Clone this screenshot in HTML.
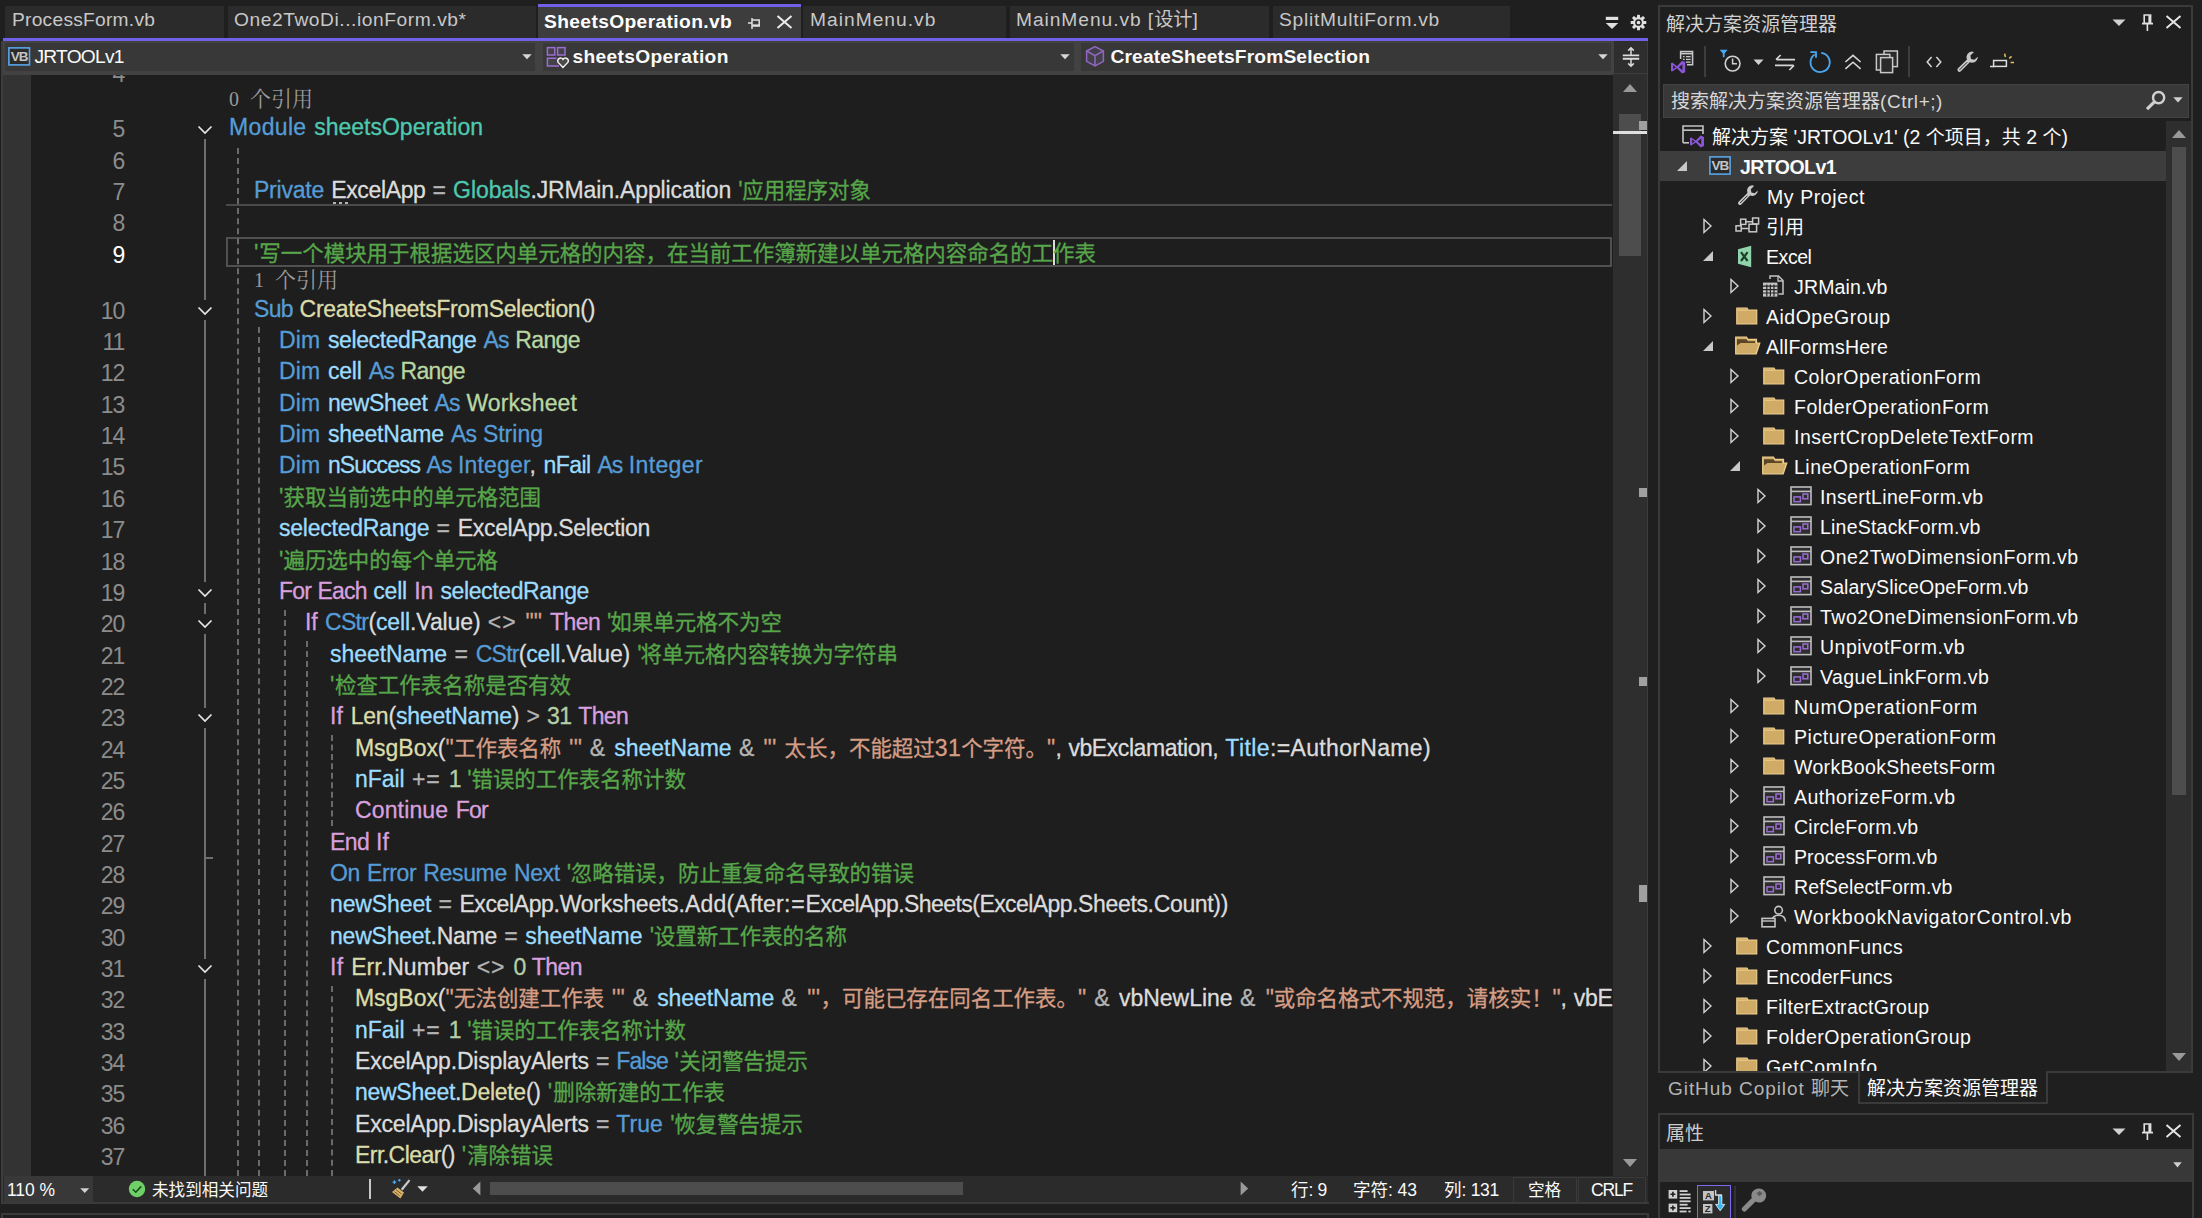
<!DOCTYPE html>
<html lang="zh-CN"><head><meta charset="utf-8"><title>JRTOOLv1 - SheetsOperation.vb</title>
<style>
*{box-sizing:border-box;margin:0;padding:0}
html,body{width:2202px;height:1218px;overflow:hidden;background:#1f1f1f}
body{position:relative;font-family:"Liberation Sans","Noto Sans CJK SC",sans-serif;color:#fafafa;font-size:19px}
i{font-style:normal}
body div,body span,body svg,body i.a{position:absolute}
.z{font-family:"Liberation Sans","Noto Sans CJK SC",sans-serif}
/* tabs */
.tab{top:6px;height:32px;background:#2b2b2b;color:#c8c8c8;font-size:19.2px;line-height:30px;white-space:nowrap;overflow:hidden}
.tab span{top:-1px}
.tab.act{top:4px;height:35px;background:#3d3d3d;border-top:3px solid #7160e8;color:#fff;font-weight:bold;line-height:31px}
#tabline{left:3px;top:38px;width:1645px;height:3px;background:#7160e8}
#navbar{left:3px;top:41px;width:1611px;height:34px;background:#424242}
.combo{top:43px;height:28px;background:#383838;color:#fafafa;font-size:19.2px;line-height:28px;white-space:nowrap}
.combo span{top:0}
/* editor */
#editor{left:0;top:75px;width:1613px;height:1101px;background:#1e1e1e;overflow:hidden}
#ed{left:0;top:-75px;width:1613px;height:1218px}
#gutter{left:3px;top:74px;width:28px;height:1102px;background:#333}
.ln{left:40px;width:84px;text-align:right;color:#8c8c8c;height:31px;line-height:31px;font-size:23px;letter-spacing:-1.2px}
.ln.cur{color:#fff}
.cl{height:31px;line-height:31px;white-space:pre;font-size:23px;word-spacing:1px;-webkit-text-stroke:0.3px}
.cl span{position:static}
.cl .z{font-size:21.46px;letter-spacing:0;line-height:0}
.lens{word-spacing:6px;color:#9a9a9a;font-family:"Liberation Serif","Noto Serif CJK SC",serif;font-size:20px;line-height:26px;height:26px;white-space:pre}
.lens .z{font-family:"Liberation Serif","Noto Serif CJK SC",serif;font-size:21px;line-height:0}
.k{color:#569cd6}.c{color:#d8a0df}.t{color:#4ec9b0}.i{color:#b8d7a3}.v{color:#9cdcfe}.f{color:#dcdcaa}
.m{color:#57a64a}.s{color:#d69d85}.n{color:#b5cea8}.p{color:#dcdcdc}.o{color:#b4b4b4}
.vg{width:0;border-left:2px dashed #6a6a6a}
.fl{width:2px;background:#6e6e6e}
/* scrollbar */
#vsb{left:1613px;top:74px;width:35px;height:1102px;background:#2e2e2e}
/* status row */
#strow{left:3px;top:1176px;width:1645px;height:27px;background:#2b2b2b}
.st{top:1177px;font-size:17.5px;line-height:27px;height:27px;color:#fafafa;white-space:pre}
.st .z,.st.z{line-height:0}
/* solution explorer */
#se{left:1658px;top:5px;width:535px;height:1068px;background:#1f1f1f;border:2px solid #3a3a3a}
#tree{left:1660px;top:121px;width:506px;height:950px;overflow:hidden}
#tree .w{left:-1660px;top:-121px;width:2202px;height:1218px}
.tr{left:1660px;width:506px;height:30px}
.tr.sel{background:#3d3d3d}
.tt{font-size:19.5px;line-height:30px;height:30px;margin-top:1px;white-space:pre;color:#fafafa}
.tt.b{font-weight:bold}
.tt .z{font-size:19px;line-height:0;position:relative;top:0.4px;letter-spacing:0}

</style></head>
<body>
<div class="tab" style="left:5px;width:219px"><span id="tb1" style="left:7px;letter-spacing:0.252px">ProcessForm.vb</span></div>
<div class="tab" style="left:228px;width:308px"><span id="tb2" style="left:6px;letter-spacing:0.562px">One2TwoDi...ionForm.vb*</span></div>
<div class="tab act" style="left:538px;width:263px"><span id="tb3" style="left:6px;letter-spacing:0.380px">SheetsOperation.vb</span></div>
<svg style="left:747px;top:17px" width="14" height="13" viewBox="0 0 14 13"><path d="M1 6H5M5 1V12M5.6 3H12.2V8.4H5.6" fill="none" stroke="#e0e0e0" stroke-width="1.5"/><path d="M5.6 8.6H12.9" stroke="#e0e0e0" stroke-width="2.2"/></svg>
<svg style="left:776px;top:15px" width="17" height="14" viewBox="0 0 17 14"><path d="M1.5 1L15.5 13M15.5 1L1.5 13" fill="none" stroke="#ececec" stroke-width="2"/></svg>
<div class="tab" style="left:803px;width:203px"><span id="tb4" style="left:7px;letter-spacing:1.019px">MainMenu.vb</span></div>
<div class="tab" style="left:1010px;width:259px"><span id="tb5" style="left:6px;letter-spacing:0.946px">MainMenu.vb [<i class="z" style="letter-spacing:0;line-height:0">设计</i>]</span></div>
<div class="tab" style="left:1273px;width:237px"><span id="tb6" style="left:6px;letter-spacing:0.753px">SplitMultiForm.vb</span></div>
<svg style="left:1605px;top:16px" width="14" height="14" viewBox="0 0 14 14"><rect x="0.8" y="0.8" width="12.4" height="3.2" fill="#e0e0e0"/><path d="M0.8 7H13.2L7 13Z" fill="#e0e0e0"/></svg>
<svg style="left:1630px;top:14px" width="17" height="17" viewBox="-8.5 -8.5 17 17"><g fill="#e0e0e0"><circle r="5.4"/><g id="gt"><rect x="-1.5" y="-7.8" width="3" height="4" rx="0.6"/></g><rect x="-1.5" y="-7.8" width="3" height="4" rx="0.6" transform="rotate(45)"/><rect x="-1.5" y="-7.8" width="3" height="4" rx="0.6" transform="rotate(90)"/><rect x="-1.5" y="-7.8" width="3" height="4" rx="0.6" transform="rotate(135)"/><rect x="-1.5" y="-7.8" width="3" height="4" rx="0.6" transform="rotate(180)"/><rect x="-1.5" y="-7.8" width="3" height="4" rx="0.6" transform="rotate(225)"/><rect x="-1.5" y="-7.8" width="3" height="4" rx="0.6" transform="rotate(270)"/><rect x="-1.5" y="-7.8" width="3" height="4" rx="0.6" transform="rotate(315)"/></g><circle r="2.6" fill="none" stroke="#1f1f1f" stroke-width="1.5"/></svg>
<div id="tabline"></div>
<div id="navbar"></div>
<div class="combo" style="left:5px;width:530px"><span id="nv1" style="left:29.5px;letter-spacing:-0.758px">JRTOOLv1</span></div>
<svg style="left:8px;top:47px" width="23" height="19" viewBox="0 0 23 19"><rect x="0.9" y="0.9" width="20.6" height="17" fill="#2b2b2b" stroke="#58a6e8" stroke-width="1.6"/><text x="11.2" y="14" text-anchor="middle" font-family="Liberation Sans, sans-serif" font-size="13.5" font-weight="bold" fill="#c4c4c4" letter-spacing="-1">VB</text></svg>
<svg style="left:522px;top:54px" width="10" height="5.5" viewBox="0 0 11 6"><path d="M0.3 0.3H10.7L5.5 5.7Z" fill="#d6d6d6"/></svg>
<div class="combo" style="left:543px;width:531px"><span id="nv2" style="left:29.5px;font-weight:bold;letter-spacing:0.319px">sheetsOperation</span></div>
<svg style="left:546px;top:46px" width="24" height="23" viewBox="0 0 24 23"><g fill="#454149" stroke="#9a6dd0" stroke-width="1.5"><rect x="1.4" y="1.6" width="7.4" height="7.4"/><rect x="11.6" y="1.6" width="7.4" height="7.4"/><path d="M10.6 12.2H1.4V20H13"/></g><path d="M17 21.4L12.2 16.4A2.7 2.7 0 0 1 17 13.4A2.7 2.7 0 0 1 21.8 16.4Z" fill="#4a4a4a" stroke="#f0f0f0" stroke-width="1.5"/></svg>
<svg style="left:1060px;top:54px" width="10" height="5.5" viewBox="0 0 11 6"><path d="M0.3 0.3H10.7L5.5 5.7Z" fill="#d6d6d6"/></svg>
<div class="combo" style="left:1081px;width:530px"><span id="nv3" style="left:29.5px;font-weight:bold;letter-spacing:0.143px">CreateSheetsFromSelection</span></div>
<svg style="left:1085px;top:45px" width="20" height="23" viewBox="0 0 20 23"><path d="M10 1.6L18.4 6V16.4L10 21L1.6 16.4V6Z" fill="#433f4a" stroke="#9068c0" stroke-width="1.5"/><path d="M1.6 6L10 10.6L18.4 6M10 10.6V21" fill="none" stroke="#9068c0" stroke-width="1.5"/></svg>
<svg style="left:1598px;top:54px" width="10" height="5.5" viewBox="0 0 11 6"><path d="M0.3 0.3H10.7L5.5 5.7Z" fill="#d6d6d6"/></svg>
<div style="left:1614px;top:41px;width:34px;height:33px;background:#2e2e2e;border-right:1px solid #3d3d3d;border-bottom:1px solid #3d3d3d"></div>
<svg style="left:1622px;top:46px" width="18" height="22" viewBox="0 0 18 22"><path d="M0.8 9.4H17.2M0.8 12.8H17.2" stroke="#dcdcdc" stroke-width="1.9"/><path d="M9 2V9M6.2 4.6L9 1.8L11.8 4.6M9 13V20M6.2 17.4L9 20.2L11.8 17.4" fill="none" stroke="#dcdcdc" stroke-width="1.5"/></svg>
<div id="editor"><div id="ed">
<div id="gutter"></div>
<div class="ln" style="top:59.4px">4</div>
<div style="left:226px;top:204px;width:1386px;height:2px;background:#4a4a4a"></div>
<div style="left:226px;top:237px;width:1386px;height:30px;border:2px solid #505050"></div>
<svg style="left:197px;top:124.6px" width="16" height="10" viewBox="0 0 16 10"><path d="M1.5 1.5L8 8L14.5 1.5" fill="none" stroke="#e6e6e6" stroke-width="1.7"/></svg>
<svg style="left:197px;top:305.9px" width="16" height="10" viewBox="0 0 16 10"><path d="M1.5 1.5L8 8L14.5 1.5" fill="none" stroke="#e6e6e6" stroke-width="1.7"/></svg>
<svg style="left:197px;top:588.0px" width="16" height="10" viewBox="0 0 16 10"><path d="M1.5 1.5L8 8L14.5 1.5" fill="none" stroke="#e6e6e6" stroke-width="1.7"/></svg>
<svg style="left:197px;top:619.3px" width="16" height="10" viewBox="0 0 16 10"><path d="M1.5 1.5L8 8L14.5 1.5" fill="none" stroke="#e6e6e6" stroke-width="1.7"/></svg>
<svg style="left:197px;top:713.4px" width="16" height="10" viewBox="0 0 16 10"><path d="M1.5 1.5L8 8L14.5 1.5" fill="none" stroke="#e6e6e6" stroke-width="1.7"/></svg>
<svg style="left:197px;top:964.1px" width="16" height="10" viewBox="0 0 16 10"><path d="M1.5 1.5L8 8L14.5 1.5" fill="none" stroke="#e6e6e6" stroke-width="1.7"/></svg>
<div class="fl" style="left:204px;top:139.1px;height:161.3px"></div>
<div class="fl" style="left:204px;top:320.4px;height:262.1px"></div>
<div class="fl" style="left:204px;top:602.5px;height:11.3px"></div>
<div class="fl" style="left:204px;top:633.8px;height:74.0px"></div>
<div class="fl" style="left:204px;top:727.9px;height:230.8px"></div>
<div class="fl" style="left:204px;top:978.6px;height:197.4px"></div>
<div style="left:205px;top:857px;width:8px;height:2px;background:#6e6e6e"></div>
<div class="vg" style="left:237.0px;top:148.1px;height:1027.9px"></div>
<div class="vg" style="left:258.0px;top:327.4px;height:848.6px"></div>
<div class="vg" style="left:283.5px;top:609.5px;height:566.5px"></div>
<div class="vg" style="left:306.0px;top:640.9px;height:535.1px"></div>
<div class="vg" style="left:331.0px;top:734.9px;height:91.0px"></div>
<div class="vg" style="left:331.0px;top:985.7px;height:190.3px"></div>
<div class="lens" style="left:229px;top:86px">0 <i class="z">个引用</i></div>
<div class="lens" style="left:254px;top:267px">1 <i class="z">个引用</i></div>
<div style="left:1053px;top:240px;width:2px;height:25px;background:#dcdcdc"></div>
<div style="left:333px;top:202px;width:3px;height:2px;background:#b4b4b4"></div>
<div style="left:339px;top:202px;width:3px;height:2px;background:#b4b4b4"></div>
<div style="left:345px;top:202px;width:3px;height:2px;background:#b4b4b4"></div>

<div class="ln" style="top:114.4px">5</div>
<div class="cl" id="L5_0" style="top:112.4px;left:229.0px;letter-spacing:0.339px"><span class="k">Module </span></div>
<div class="cl" id="L5_1" style="top:112.4px;left:314.2px;letter-spacing:0.001px"><span class="t">sheetsOperation</span></div>
<div class="ln" style="top:145.7px">6</div>
<div class="ln" style="top:177.0px">7</div>
<div class="cl" id="L7_0" style="top:175.0px;left:254.0px;letter-spacing:-0.223px"><span class="k">Private </span></div>
<div class="cl" id="L7_1" style="top:175.0px;left:331.2px;letter-spacing:-0.351px"><span class="p">ExcelApp </span></div>
<div class="cl" id="L7_2" style="top:175.0px;left:432.6px;letter-spacing:-0.164px"><span class="o">= </span></div>
<div class="cl" id="L7_3" style="top:175.0px;left:453.1px;letter-spacing:-0.083px"><span class="t">Globals</span></div>
<div class="cl" id="L7_4" style="top:175.0px;left:530.5px;letter-spacing:-0.143px"><span class="p">.JRMain.Application </span></div>
<div class="cl" id="L7_5" style="top:175.0px;left:738.3px;letter-spacing:-0.441px"><span class="m">'<i class="z">应用程序对象</i></span></div>
<div class="ln" style="top:208.3px">8</div>
<div class="ln cur" style="top:239.6px">9</div>
<div class="cl" id="L9" style="top:237.6px;left:254.0px;letter-spacing:0.906px"><span class="m">'<i class="z">写一个模块用于根据选区内单元格的内容，在当前工作簿新建以单元格内容命名的工作表</i></span></div>
<div class="ln" style="top:295.7px">10</div>
<div class="cl" id="L10_0" style="top:293.7px;left:254.0px;letter-spacing:-0.682px"><span class="k">Sub </span></div>
<div class="cl" id="L10_1" style="top:293.7px;left:299.6px;letter-spacing:-0.328px"><span class="f">CreateSheetsFromSelection</span><span class="p">()</span></div>
<div class="ln" style="top:327.0px">11</div>
<div class="cl" id="L11_0" style="top:325.0px;left:279.0px;letter-spacing:0.155px"><span class="k">Dim </span></div>
<div class="cl" id="L11_1" style="top:325.0px;left:327.9px;letter-spacing:-0.382px"><span class="v">selectedRange </span></div>
<div class="cl" id="L11_2" style="top:325.0px;left:483.4px;letter-spacing:-0.811px"><span class="k">As </span></div>
<div class="cl" id="L11_3" style="top:325.0px;left:515.2px;letter-spacing:-0.596px"><span class="i">Range</span></div>
<div class="ln" style="top:358.4px">12</div>
<div class="cl" id="L12_0" style="top:356.4px;left:279.0px;letter-spacing:0.155px"><span class="k">Dim </span></div>
<div class="cl" id="L12_1" style="top:356.4px;left:327.9px;letter-spacing:-0.221px"><span class="v">cell </span></div>
<div class="cl" id="L12_2" style="top:356.4px;left:368.7px;letter-spacing:-0.811px"><span class="k">As </span></div>
<div class="cl" id="L12_3" style="top:356.4px;left:400.5px;letter-spacing:-0.656px"><span class="i">Range</span></div>
<div class="ln" style="top:389.7px">13</div>
<div class="cl" id="L13_0" style="top:387.7px;left:279.0px;letter-spacing:0.155px"><span class="k">Dim </span></div>
<div class="cl" id="L13_1" style="top:387.7px;left:327.9px;letter-spacing:-0.334px"><span class="v">newSheet </span></div>
<div class="cl" id="L13_2" style="top:387.7px;left:434.6px;letter-spacing:-0.811px"><span class="k">As </span></div>
<div class="cl" id="L13_3" style="top:387.7px;left:466.4px;letter-spacing:0.120px"><span class="i">Worksheet</span></div>
<div class="ln" style="top:421.1px">14</div>
<div class="cl" id="L14_0" style="top:419.1px;left:279.0px;letter-spacing:0.155px"><span class="k">Dim </span></div>
<div class="cl" id="L14_1" style="top:419.1px;left:327.9px;letter-spacing:-0.182px"><span class="v">sheetName </span></div>
<div class="cl" id="L14_2" style="top:419.1px;left:451.1px;letter-spacing:-0.811px"><span class="k">As </span></div>
<div class="cl" id="L14_3" style="top:419.1px;left:482.9px;letter-spacing:0.001px"><span class="k">String</span></div>
<div class="ln" style="top:452.4px">15</div>
<div class="cl" id="L15_0" style="top:450.4px;left:279.0px;letter-spacing:0.155px"><span class="k">Dim </span></div>
<div class="cl" id="L15_1" style="top:450.4px;left:327.9px;letter-spacing:-0.934px"><span class="v">nSuccess </span></div>
<div class="cl" id="L15_2" style="top:450.4px;left:426.6px;letter-spacing:-0.945px"><span class="k">As </span></div>
<div class="cl" id="L15_3" style="top:450.4px;left:458.0px;letter-spacing:0.164px"><span class="k">Integer</span><span class="p">, </span></div>
<div class="cl" id="L15_4" style="top:450.4px;left:543.6px;letter-spacing:-0.575px"><span class="v">nFail </span></div>
<div class="cl" id="L15_5" style="top:450.4px;left:597.4px;letter-spacing:-0.978px"><span class="k">As </span></div>
<div class="cl" id="L15_6" style="top:450.4px;left:628.7px;letter-spacing:0.384px"><span class="k">Integer</span></div>
<div class="ln" style="top:483.8px">16</div>
<div class="cl" id="L16" style="top:481.8px;left:279.0px;letter-spacing:0.141px"><span class="m">'<i class="z">获取当前选中的单元格范围</i></span></div>
<div class="ln" style="top:515.1px">17</div>
<div class="cl" id="L17_0" style="top:513.1px;left:279.0px;letter-spacing:-0.239px"><span class="v">selectedRange </span></div>
<div class="cl" id="L17_1" style="top:513.1px;left:436.5px;letter-spacing:0.236px"><span class="o">= </span></div>
<div class="cl" id="L17_2" style="top:513.1px;left:457.8px;letter-spacing:-0.333px"><span class="p">ExcelApp.Selection</span></div>
<div class="ln" style="top:546.5px">18</div>
<div class="cl" id="L18" style="top:544.5px;left:279.0px;letter-spacing:0.047px"><span class="m">'<i class="z">遍历选中的每个单元格</i></span></div>
<div class="ln" style="top:577.8px">19</div>
<div class="cl" id="L19_0" style="top:575.8px;left:279.0px;letter-spacing:-0.824px"><span class="c">For Each </span></div>
<div class="cl" id="L19_1" style="top:575.8px;left:373.3px;letter-spacing:-0.201px"><span class="v">cell </span></div>
<div class="cl" id="L19_2" style="top:575.8px;left:414.2px;letter-spacing:-0.126px"><span class="c">In </span></div>
<div class="cl" id="L19_3" style="top:575.8px;left:440.4px;letter-spacing:-0.373px"><span class="v">selectedRange</span></div>
<div class="ln" style="top:609.1px">20</div>
<div class="cl" id="L20_0" style="top:607.1px;left:305.0px;letter-spacing:-0.091px"><span class="c">If </span></div>
<div class="cl" id="L20_1" style="top:607.1px;left:324.9px;letter-spacing:-0.625px"><span class="k">CStr</span></div>
<div class="cl" id="L20_2" style="top:607.1px;left:368.4px;letter-spacing:-0.104px"><span class="p">(</span><span class="v">cell</span><span class="p">.Value) </span></div>
<div class="cl" id="L20_3" style="top:607.1px;left:487.8px;letter-spacing:1.111px"><span class="o">&lt;&gt; </span></div>
<div class="cl" id="L20_4" style="top:607.1px;left:525.4px;letter-spacing:0.255px"><span class="s">"" </span></div>
<div class="cl" id="L20_5" style="top:607.1px;left:549.9px;letter-spacing:-0.526px"><span class="c">Then </span></div>
<div class="cl" id="L20_6" style="top:607.1px;left:607.1px;letter-spacing:-1.147px"><span class="m">'<i class="z">如果单元格不为空</i></span></div>
<div class="ln" style="top:640.5px">21</div>
<div class="cl" id="L21_0" style="top:638.5px;left:330.0px;letter-spacing:-0.062px"><span class="v">sheetName </span></div>
<div class="cl" id="L21_1" style="top:638.5px;left:454.4px;letter-spacing:0.236px"><span class="o">= </span></div>
<div class="cl" id="L21_2" style="top:638.5px;left:475.7px;letter-spacing:-0.725px"><span class="k">CStr</span></div>
<div class="cl" id="L21_3" style="top:638.5px;left:518.8px;letter-spacing:-0.181px"><span class="p">(</span><span class="v">cell</span><span class="p">.Value) </span></div>
<div class="cl" id="L21_4" style="top:638.5px;left:637.2px;letter-spacing:-1.059px"><span class="m">'<i class="z">将单元格内容转换为字符串</i></span></div>
<div class="ln" style="top:671.8px">22</div>
<div class="cl" id="L22" style="top:669.8px;left:330.0px;letter-spacing:0.594px"><span class="m">'<i class="z">检查工作表名称是否有效</i></span></div>
<div class="ln" style="top:703.2px">23</div>
<div class="cl" id="L23_0" style="top:701.2px;left:330.0px;letter-spacing:0.176px"><span class="c">If </span></div>
<div class="cl" id="L23_1" style="top:701.2px;left:350.7px;letter-spacing:-0.202px"><span class="f">Len</span><span class="p">(</span><span class="v">sheetName</span><span class="p">) </span></div>
<div class="cl" id="L23_2" style="top:701.2px;left:526.4px;letter-spacing:-0.164px"><span class="o">&gt; </span></div>
<div class="cl" id="L23_3" style="top:701.2px;left:546.9px;letter-spacing:-0.528px"><span class="n">31 </span></div>
<div class="cl" id="L23_4" style="top:701.2px;left:578.3px;letter-spacing:-0.684px"><span class="c">Then</span></div>
<div class="ln" style="top:734.5px">24</div>
<div class="cl" id="L24_0" style="top:732.5px;left:355.0px;letter-spacing:-0.038px"><span class="f">MsgBox</span><span class="p">(</span></div>
<div class="cl" id="L24_1" style="top:732.5px;left:445.5px;letter-spacing:0.301px"><span class="s">"<i class="z">工作表名称</i> '" </span></div>
<div class="cl" id="L24_2" style="top:732.5px;left:589.8px;letter-spacing:0.883px"><span class="o">&amp; </span></div>
<div class="cl" id="L24_3" style="top:732.5px;left:614.3px;letter-spacing:-0.032px"><span class="v">sheetName </span></div>
<div class="cl" id="L24_4" style="top:732.5px;left:739.0px;letter-spacing:0.883px"><span class="o">&amp; </span></div>
<div class="cl" id="L24_5" style="top:732.5px;left:763.5px;letter-spacing:0.378px"><span class="s">"' <i class="z">太长，不能超过</i>31<i class="z">个字符。</i>"</span></div>
<div class="cl" id="L24_6" style="top:732.5px;left:1055.5px;letter-spacing:-0.432px"><span class="p">, vbExclamation, </span></div>
<div class="cl" id="L24_7" style="top:732.5px;left:1225.3px;letter-spacing:0.418px"><span class="v">Title</span></div>
<div class="cl" id="L24_8" style="top:732.5px;left:1270.0px;letter-spacing:0.338px"><span class="p">:=AuthorName)</span></div>
<div class="ln" style="top:765.9px">25</div>
<div class="cl" id="L25_0" style="top:763.9px;left:355.0px;letter-spacing:-0.042px"><span class="v">nFail </span></div>
<div class="cl" id="L25_1" style="top:763.9px;left:412.0px;letter-spacing:0.845px"><span class="o">+= </span></div>
<div class="cl" id="L25_2" style="top:763.9px;left:448.8px;letter-spacing:-0.894px"><span class="n">1 </span></div>
<div class="cl" id="L25_3" style="top:763.9px;left:467.2px;letter-spacing:-0.153px"><span class="m">'<i class="z">错误的工作表名称计数</i></span></div>
<div class="ln" style="top:797.2px">26</div>
<div class="cl" id="L26_0" style="top:795.2px;left:355.0px;letter-spacing:0.137px"><span class="c">Continue </span></div>
<div class="cl" id="L26_1" style="top:795.2px;left:455.7px;letter-spacing:-0.733px"><span class="c">For</span></div>
<div class="ln" style="top:828.6px">27</div>
<div class="cl" id="L27_0" style="top:826.6px;left:330.0px;letter-spacing:-0.582px"><span class="c">End </span></div>
<div class="cl" id="L27_1" style="top:826.6px;left:376.0px;letter-spacing:0.109px"><span class="c">If</span></div>
<div class="ln" style="top:859.9px">28</div>
<div class="cl" id="L28_0" style="top:857.9px;left:330.0px;letter-spacing:-0.357px"><span class="k">On Error Resume Next </span></div>
<div class="cl" id="L28_1" style="top:857.9px;left:566.8px;letter-spacing:-0.472px"><span class="m">'<i class="z">忽略错误，防止重复命名导致的错误</i></span></div>
<div class="ln" style="top:891.3px">29</div>
<div class="cl" id="L29_0" style="top:889.3px;left:330.0px;letter-spacing:-0.123px"><span class="v">newSheet </span></div>
<div class="cl" id="L29_1" style="top:889.3px;left:438.6px;letter-spacing:-0.014px"><span class="o">= </span></div>
<div class="cl" id="L29_2" style="top:889.3px;left:459.4px;letter-spacing:-0.384px"><span class="p">ExcelApp</span></div>
<div class="cl" id="L29_3" style="top:889.3px;left:553.5px;letter-spacing:-0.228px"><span class="p">.Worksheets</span></div>
<div class="cl" id="L29_4" style="top:889.3px;left:678.4px;letter-spacing:0.205px"><span class="p">.Add(After</span></div>
<div class="cl" id="L29_5" style="top:889.3px;left:784.0px;letter-spacing:0.836px"><span class="p">:=</span></div>
<div class="cl" id="L29_6" style="top:889.3px;left:805.5px;letter-spacing:-0.558px"><span class="p">ExcelApp.Sheets</span></div>
<div class="cl" id="L29_7" style="top:889.3px;left:972.3px;letter-spacing:-0.570px"><span class="p">(ExcelApp</span></div>
<div class="cl" id="L29_8" style="top:889.3px;left:1072.0px;letter-spacing:-0.340px"><span class="p">.Sheets.Count))</span></div>
<div class="ln" style="top:922.6px">30</div>
<div class="cl" id="L30_0" style="top:920.6px;left:330.0px;letter-spacing:-0.225px"><span class="v">newSheet</span><span class="p">.Name </span></div>
<div class="cl" id="L30_1" style="top:920.6px;left:504.3px;letter-spacing:0.086px"><span class="o">= </span></div>
<div class="cl" id="L30_2" style="top:920.6px;left:525.3px;letter-spacing:-0.062px"><span class="v">sheetName </span></div>
<div class="cl" id="L30_3" style="top:920.6px;left:649.7px;letter-spacing:-0.200px"><span class="m">'<i class="z">设置新工作表的名称</i></span></div>
<div class="ln" style="top:953.9px">31</div>
<div class="cl" id="L31_0" style="top:951.9px;left:330.0px;letter-spacing:0.343px"><span class="c">If </span></div>
<div class="cl" id="L31_1" style="top:951.9px;left:351.2px;letter-spacing:0.056px"><span class="f">Err</span><span class="p">.Number </span></div>
<div class="cl" id="L31_2" style="top:951.9px;left:476.8px;letter-spacing:0.845px"><span class="o">&lt;&gt; </span></div>
<div class="cl" id="L31_3" style="top:951.9px;left:513.6px;letter-spacing:-0.994px"><span class="n">0 </span></div>
<div class="cl" id="L31_4" style="top:951.9px;left:531.8px;letter-spacing:-0.559px"><span class="c">Then</span></div>
<div class="ln" style="top:985.3px">32</div>
<div class="cl" id="L32_0" style="top:983.3px;left:355.0px;letter-spacing:-0.038px"><span class="f">MsgBox</span><span class="p">(</span></div>
<div class="cl" id="L32_1" style="top:983.3px;left:445.5px;letter-spacing:0.299px"><span class="s">"<i class="z">无法创建工作表</i> '" </span></div>
<div class="cl" id="L32_2" style="top:983.3px;left:632.7px;letter-spacing:0.883px"><span class="o">&amp; </span></div>
<div class="cl" id="L32_3" style="top:983.3px;left:657.2px;letter-spacing:-0.072px"><span class="v">sheetName </span></div>
<div class="cl" id="L32_4" style="top:983.3px;left:781.5px;letter-spacing:1.483px"><span class="o">&amp; </span></div>
<div class="cl" id="L32_5" style="top:983.3px;left:807.2px;letter-spacing:0.380px"><span class="s">"'<i class="z">，可能已存在同名工作表。</i>" </span></div>
<div class="cl" id="L32_6" style="top:983.3px;left:1094.3px;letter-spacing:0.983px"><span class="o">&amp; </span></div>
<div class="cl" id="L32_7" style="top:983.3px;left:1119.0px;letter-spacing:-0.019px"><span class="p">vbNewLine </span></div>
<div class="cl" id="L32_8" style="top:983.3px;left:1240.0px;letter-spacing:1.533px"><span class="o">&amp; </span></div>
<div class="cl" id="L32_9" style="top:983.3px;left:1265.8px;letter-spacing:-0.275px"><span class="s">"<i class="z">或命名格式不规范，请核实！</i>"</span></div>
<div class="cl" id="L32_10" style="top:983.3px;left:1560.5px;letter-spacing:-0.254px"><span class="p">, vbExcl</span></div>
<div class="ln" style="top:1016.6px">33</div>
<div class="cl" id="L33_0" style="top:1014.6px;left:355.0px;letter-spacing:-0.042px"><span class="v">nFail </span></div>
<div class="cl" id="L33_1" style="top:1014.6px;left:412.0px;letter-spacing:0.845px"><span class="o">+= </span></div>
<div class="cl" id="L33_2" style="top:1014.6px;left:448.8px;letter-spacing:-0.894px"><span class="n">1 </span></div>
<div class="cl" id="L33_3" style="top:1014.6px;left:467.2px;letter-spacing:-0.153px"><span class="m">'<i class="z">错误的工作表名称计数</i></span></div>
<div class="ln" style="top:1048.0px">34</div>
<div class="cl" id="L34_0" style="top:1046.0px;left:355.0px;letter-spacing:-0.185px"><span class="p">ExcelApp.DisplayAlerts </span></div>
<div class="cl" id="L34_1" style="top:1046.0px;left:595.9px;letter-spacing:-0.214px"><span class="o">= </span></div>
<div class="cl" id="L34_2" style="top:1046.0px;left:616.3px;letter-spacing:-0.923px"><span class="k">False </span></div>
<div class="cl" id="L34_3" style="top:1046.0px;left:674.4px;letter-spacing:0.459px"><span class="m">'<i class="z">关闭警告提示</i></span></div>
<div class="ln" style="top:1079.3px">35</div>
<div class="cl" id="L35_0" style="top:1077.3px;left:355.0px;letter-spacing:-0.289px"><span class="v">newSheet</span><span class="p">.</span><span class="f">Delete</span><span class="p">() </span></div>
<div class="cl" id="L35_1" style="top:1077.3px;left:547.7px;letter-spacing:1.253px"><span class="m">'<i class="z">删除新建的工作表</i></span></div>
<div class="ln" style="top:1110.7px">36</div>
<div class="cl" id="L36_0" style="top:1108.7px;left:355.0px;letter-spacing:-0.185px"><span class="p">ExcelApp.DisplayAlerts </span></div>
<div class="cl" id="L36_1" style="top:1108.7px;left:595.9px;letter-spacing:-0.214px"><span class="o">= </span></div>
<div class="cl" id="L36_2" style="top:1108.7px;left:616.3px;letter-spacing:0.034px"><span class="k">True </span></div>
<div class="cl" id="L36_3" style="top:1108.7px;left:670.3px;letter-spacing:-0.441px"><span class="m">'<i class="z">恢复警告提示</i></span></div>
<div class="ln" style="top:1142.0px">37</div>
<div class="cl" id="L37_0" style="top:1140.0px;left:355.0px;letter-spacing:-0.556px"><span class="f">Err</span><span class="p">.</span><span class="f">Clear</span><span class="p">() </span></div>
<div class="cl" id="L37_1" style="top:1140.0px;left:461.8px;letter-spacing:0.966px"><span class="m">'<i class="z">清除错误</i></span></div>
</div></div><div id="vsb"></div>
<div style="left:1px;top:41px;width:2px;height:1162px;background:#3d3d3d"></div>
<svg style="left:1622px;top:83px" width="16" height="10" viewBox="0 0 16 10"><path d="M8 1L15 9H1Z" fill="#999"/></svg>
<svg style="left:1622px;top:1158px" width="16" height="10" viewBox="0 0 16 10"><path d="M8 9L15 1H1Z" fill="#999"/></svg>
<div style="left:1619px;top:114px;width:22px;height:142px;background:#4d4d4d"></div>
<div style="left:1639px;top:121px;width:8px;height:9px;background:#a0a0a0"></div>
<div style="left:1613px;top:131px;width:34px;height:3px;background:#e0e0e0"></div>
<div style="left:1639px;top:488px;width:8px;height:9px;background:#a0a0a0"></div>
<div style="left:1639px;top:677px;width:8px;height:9px;background:#a0a0a0"></div>
<div style="left:1639px;top:885px;width:8px;height:17px;background:#a0a0a0"></div>
<div style="left:1647px;top:41px;width:1px;height:1162px;background:#3d3d3d"></div>
<!-- status row -->
<div id="strow"></div>
<div style="left:4px;top:1176px;width:89px;height:26px;background:#383838"></div>
<span class="st" id="sz" style="left:7px;letter-spacing:-0.066px">110 %</span>
<svg style="left:80px;top:1187.5px" width="9.5" height="5.2" viewBox="0 0 11 6"><path d="M0.3 0.3H10.7L5.5 5.7Z" fill="#d0d0d0"/></svg>
<svg style="left:128px;top:1180px" width="18" height="18" viewBox="0 0 18 18"><circle cx="9" cy="9" r="8.2" fill="#70d068"/><path d="M4.8 9.2L7.8 12.2L13.2 6.4" fill="none" stroke="#1c4a1c" stroke-width="1.6"/></svg>
<span class="st" style="left:152px"><i class="z" style="font-size:16.6px">未找到相关问题</i></span>
<div style="left:369px;top:1179px;width:2px;height:20px;background:#c8c8c8"></div>
<svg style="left:390px;top:1178px" width="24" height="22" viewBox="0 0 24 22"><path d="M18.6 1.4L20.4 2.8L12.6 12.4L10.8 11Z" fill="#c8c8c8"/><path d="M7.4 9.4L14 14.6L10.4 20.6L2 14Z" fill="#d9b36c"/><path d="M4.4 13.6L9.6 17.8M6 11.6L11.4 16" stroke="#7a5d2a" stroke-width="1"/><path d="M4.4 2.2V6M2.5 4.1H6.3M9.4 1V3.6M8.1 2.3H10.7" stroke="#4aa8f0" stroke-width="1.3"/></svg>
<svg style="left:417px;top:1186px" width="11" height="6" viewBox="0 0 11 6"><path d="M0.3 0.3H10.7L5.5 5.7Z" fill="#e0e0e0"/></svg>
<svg style="left:472px;top:1181px" width="9" height="15" viewBox="0 0 9 15"><path d="M8.4 0.6V14.4L0.8 7.5Z" fill="#999"/></svg>
<div style="left:490px;top:1182px;width:473px;height:13px;background:#4d4d4d"></div>
<svg style="left:1240px;top:1181px" width="9" height="15" viewBox="0 0 9 15"><path d="M0.6 0.6V14.4L8.2 7.5Z" fill="#999"/></svg>
<span class="st" id="s1" style="left:1291px;letter-spacing:-0.323px"><i class="z" style="letter-spacing:0">行</i>: 9</span>
<span class="st" id="s2" style="left:1353px;letter-spacing:-0.051px"><i class="z" style="letter-spacing:0">字符</i>: 43</span>
<span class="st" id="s3" style="left:1444px;letter-spacing:-0.287px"><i class="z" style="letter-spacing:0">列</i>: 131</span>
<div style="left:1513px;top:1177px;width:64px;height:26px;border:1px solid #3a3a3a"></div>
<div style="left:1578px;top:1177px;width:68px;height:26px;border:1px solid #3a3a3a"></div>
<span class="st" style="left:1528px"><i class="z" style="font-size:16.6px">空格</i></span>
<span class="st" id="s4" style="left:1591px;letter-spacing:-1.176px">CRLF</span>
<!-- bottom panel top edge -->
<div style="left:1px;top:1202px;width:1648px;height:2px;background:#3a3a3a"></div>
<div style="left:1px;top:1213px;width:1648px;height:8px;background:#1f1f1f;border:2px solid #3a3a3a"></div>
<div id="se"></div>
<span id="seT" class="z" style="left:1666px;top:11px;font-size:19px;line-height:28px;color:#d0d0d0;white-space:pre">解决方案资源管理器</span>
<svg style="left:2112px;top:19px" width="14" height="8" viewBox="0 0 14 8"><path d="M0.5 0.5H13.5L7 7Z" fill="#d0d0d0"/></svg>
<svg style="left:2141px;top:14px" width="13" height="18" viewBox="0 0 13 18"><path d="M3.2 1H9.6V9.2H3.2Z M1 9.6H12 M6.4 9.8V17" fill="none" stroke="#e0e0e0" stroke-width="1.6"/><path d="M8.4 1.5V9" stroke="#e0e0e0" stroke-width="2"/></svg>
<svg style="left:2165px;top:15px" width="17" height="14" viewBox="0 0 17 14"><path d="M1.5 1L15.5 13M15.5 1L1.5 13" fill="none" stroke="#e6e6e6" stroke-width="1.9"/></svg>
<!-- toolbar -->
<svg style="left:1670px;top:50px" width="25" height="25" viewBox="0 0 25 25"><path d="M10.6 9V1.4H22.6V14.8H17" fill="#2a2a2a" stroke="#c8c8c8" stroke-width="1.5"/><path d="M10.6 3.6H22.6" stroke="#c8c8c8" stroke-width="1.6"/><path d="M13 6.6H14.6M16 6.6H20.6M13 9.4H14.6M16 9.4H20.6M16 12.2H20.6" stroke="#c8c8c8" stroke-width="1.3"/><path d="M2.2 12.6L7 16.2L12 10.8L15.2 12.2V22.2L12 23.6L7 18.2L2.2 21.6L1 21V13.2Z M3.2 15.2V19.2L5.8 17.2Z M8.8 17.2L12.4 20.2V14.2Z" fill="#8a56d6" fill-rule="evenodd"/></svg>
<div style="left:1704px;top:46px;width:2px;height:31px;background:#3d3d3d"></div>
<svg style="left:1719px;top:49px" width="24" height="25" viewBox="0 0 24 25"><path d="M0.6 0.8H8.6L5.6 4.4V8.2H3.8V4.4Z" fill="#4aa8f0"/><circle cx="13.6" cy="14.6" r="7.4" fill="none" stroke="#d0d0d0" stroke-width="1.6"/><path d="M13.6 9.4V14.8H18" fill="none" stroke="#d0d0d0" stroke-width="1.5"/></svg>
<svg style="left:1753px;top:59px" width="11" height="7" viewBox="0 0 11 7"><path d="M0.5 0.5H10.5L5.5 6Z" fill="#d0d0d0"/></svg>
<svg style="left:1774px;top:54px" width="22" height="17" viewBox="0 0 22 17"><path d="M21 5.6H2.4M6.6 1L2 5.6M1 11.4H19.6M15.4 16L20 11.4" fill="none" stroke="#d6d6d6" stroke-width="1.6"/></svg>
<svg style="left:1807px;top:50px" width="24" height="25" viewBox="0 0 24 25"><path d="M7.6 4.6A9.6 9.6 0 1 0 14.2 2.9" fill="none" stroke="#4aa8f0" stroke-width="1.8"/><path d="M3.4 2.2H9V7.8" fill="none" stroke="#4aa8f0" stroke-width="1.8"/></svg>
<svg style="left:1844px;top:54px" width="18" height="16" viewBox="0 0 18 16"><path d="M1.4 8L9 1.4L16.6 8M1.4 14.8L9 8.2L16.6 14.8" fill="none" stroke="#d6d6d6" stroke-width="1.6"/></svg>
<svg style="left:1875px;top:50px" width="24" height="24" viewBox="0 0 24 24"><rect x="9" y="1" width="13.4" height="15.6" fill="#2a2a2a" stroke="#c8c8c8" stroke-width="1.5"/><rect x="1.4" y="4.4" width="13.4" height="15.6" fill="#2a2a2a" stroke="#c8c8c8" stroke-width="1.5"/><rect x="5.6" y="7.6" width="12" height="15" fill="#2a2a2a" stroke="#c8c8c8" stroke-width="1.5"/></svg>
<div style="left:1908px;top:46px;width:2px;height:31px;background:#3d3d3d"></div>
<svg style="left:1926px;top:56px" width="16" height="12" viewBox="0 0 16 12"><path d="M5.6 1L1.2 6L5.6 11M10.4 1L14.8 6L10.4 11" fill="none" stroke="#d6d6d6" stroke-width="1.5"/></svg>
<svg style="left:1956px;top:50px" width="24" height="24" viewBox="0 0 24 24"><path d="M16 1.4A5.8 5.8 0 0 0 11 9.4L1.8 18.6A2 2 0 0 0 4.6 21.4L13.8 12.2A5.8 5.8 0 0 0 21.8 6.8L18.4 9.8L15 9L14.4 5.6L17.8 2.2A5.8 5.8 0 0 0 16 1.4Z" fill="#c8c8c8"/><path d="M3.4 20L11.2 12.2" stroke="#2a2a2a" stroke-width="1"/></svg>
<svg style="left:1989px;top:52px" width="27" height="17" viewBox="0 0 27 17"><path d="M1 14.4H4.6V8.6H17.4V14.4" fill="none" stroke="#dcdcdc" stroke-width="1.5"/><path d="M4 14.4H18" stroke="#dcdcdc" stroke-width="1.5"/><path d="M15.6 1.6L16.4 5M20.2 6.4L22.6 4.4M21.6 10.4H25" stroke="#e8c15a" stroke-width="1.5" fill="none"/></svg>
<!-- search -->
<div style="left:1663px;top:84px;width:526px;height:34px;background:#383838;border:1px solid #434343"></div>
<span id="seS" style="left:1671px;top:88px;font-size:19px;line-height:28px;color:#d6d6d6;white-space:pre;letter-spacing:0.551px"><i class="z" style="letter-spacing:0">搜索解决方案资源管理器</i>(Ctrl+;)</span>
<svg style="left:2145px;top:90px" width="22" height="21" viewBox="0 0 22 21"><circle cx="13.6" cy="7.6" r="5.6" fill="none" stroke="#d0d0d0" stroke-width="2.4"/><path d="M9.4 11.8L2 19.2" stroke="#d0d0d0" stroke-width="3.2"/></svg>
<svg style="left:2173px;top:97px" width="10" height="6" viewBox="0 0 10 6"><path d="M0.3 0.3H9.7L5 5.6Z" fill="#d0d0d0"/></svg>
<!-- tree scrollbar -->
<div style="left:2166px;top:121px;width:25px;height:950px;background:#2e2e2e"></div>
<div style="left:2172px;top:147px;width:14px;height:648px;background:#4d4d4d"></div>
<svg style="left:2171px;top:129px" width="16" height="10" viewBox="0 0 16 10"><path d="M8 1L15 9H1Z" fill="#999"/></svg>
<svg style="left:2171px;top:1052px" width="16" height="10" viewBox="0 0 16 10"><path d="M8 9L15 1H1Z" fill="#999"/></svg>

<div id="tree"><div class="w">
<svg style="left:1682px;top:125px" width="23" height="23" viewBox="0 0 23 23"><path d="M1 17.8V1H21V9" fill="none" stroke="#c4c4c4" stroke-width="1.6"/><path d="M1 5.2H21" stroke="#c4c4c4" stroke-width="1.6"/><path d="M1 17.8H7" stroke="#c4c4c4" stroke-width="1.6"/><path d="M9.2 12.4L13.8 15.6L18.6 10.6L22 12V21L18.6 22.4L13.8 17.4L9.2 20.6L8 20V13Z M10.2 14.6V18.4L12.6 16.5Z M15.6 16.5L19.2 19.4V13.6Z" fill="#8a56d6" fill-rule="evenodd"/></svg>
<span class="tt" id="T0" style="left:1712px;top:121px;letter-spacing:-0.005px"><i class="z">解决方案</i> 'JRTOOLv1' (2 <i class="z">个项目，共</i> 2 <i class="z">个</i>)</span>
<div class="tr sel" style="top:151px"></div>
<svg style="left:1676.6px;top:160.6px" width="10" height="10" viewBox="0 0 10 10"><path d="M10 0V10H0Z" fill="#c8c8c8"/></svg>
<svg style="left:1709px;top:156px" width="22" height="20" viewBox="0 0 22 20"><rect x="0.9" y="0.9" width="20.2" height="17.2" fill="#2b2b2b" stroke="#58a6e8" stroke-width="1.6"/><text x="11" y="14.2" text-anchor="middle" font-family="Liberation Sans, sans-serif" font-size="13.5" font-weight="bold" fill="#c4c4c4" letter-spacing="-1">VB</text></svg>
<span class="tt b" id="T1" style="left:1740px;top:151px;letter-spacing:-0.555px">JRTOOLv1</span>
<svg style="left:1737px;top:184px" width="23" height="23" viewBox="0 0 23 23"><path d="M15.2 1.2A5.6 5.6 0 0 0 10.4 8.9L1.6 17.7A1.9 1.9 0 0 0 4.3 20.4L13.1 11.6A5.6 5.6 0 0 0 20.8 6.4L17.6 9.2L14.4 8.4L13.8 5.2L17 2A5.6 5.6 0 0 0 15.2 1.2Z" fill="#c6c6c6"/><path d="M3.2 19L10.6 11.6" stroke="#2a2a2a" stroke-width="1"/></svg>
<span class="tt" id="T2" style="left:1767px;top:181px;letter-spacing:0.589px">My Project</span>
<svg style="left:1702px;top:217.6px" width="10" height="16" viewBox="0 0 10 16"><path d="M2 1.6L9 8L2 14.4Z" fill="none" stroke="#d4d4d4" stroke-width="1.4"/></svg>
<svg style="left:1735px;top:217px" width="25" height="17" viewBox="0 0 25 17"><g fill="none" stroke="#c8c8c8" stroke-width="1.5"><rect x="1" y="8.8" width="5.2" height="5.2"/><rect x="5.6" y="2.2" width="5.2" height="5.2"/><rect x="14" y="7.2" width="7.6" height="7.6"/><rect x="17.6" y="1" width="6" height="6"/><path d="M6.2 11.4H14M10.8 4.8H17.6"/></g></svg>
<span class="tt" id="T3" style="left:1766px;top:211px;letter-spacing:0"><i class="z">引用</i></span>
<svg style="left:1702.6px;top:250.6px" width="10" height="10" viewBox="0 0 10 10"><path d="M10 0V10H0Z" fill="#c8c8c8"/></svg>
<svg style="left:1737px;top:245px" width="17" height="23" viewBox="0 0 17 23"><path d="M1 4.2L14.2 0.8V22.2L1 18.8Z" fill="#8fd4ab"/><path d="M4 7.2L10.6 16M10.6 7.2L4 16" stroke="#1f3d2b" stroke-width="2.2" fill="none"/></svg>
<span class="tt" id="T4" style="left:1766px;top:241px;letter-spacing:-0.438px">Excel</span>
<svg style="left:1729px;top:277.6px" width="10" height="16" viewBox="0 0 10 16"><path d="M2 1.6L9 8L2 14.4Z" fill="none" stroke="#d4d4d4" stroke-width="1.4"/></svg>
<svg style="left:1762px;top:275px" width="23" height="23" viewBox="0 0 23 23"><path d="M8 4V1H16.5L21 5.5V19H16.5" fill="none" stroke="#c4c4c4" stroke-width="1.5"/><path d="M16 1V6H21" fill="none" stroke="#c4c4c4" stroke-width="1.3"/><rect x="1" y="7.6" width="14.4" height="14" fill="#c4c4c4"/><g stroke="#262626" stroke-width="1.2"><path d="M1 11.2H15.4M1 14.6H15.4M1 18H15.4M4.8 9.4V21.6M8.4 9.4V21.6M12 9.4V21.6"/></g></svg>
<span class="tt" id="T5" style="left:1794px;top:271px;letter-spacing:0.164px">JRMain.vb</span>
<svg style="left:1702px;top:307.6px" width="10" height="16" viewBox="0 0 10 16"><path d="M2 1.6L9 8L2 14.4Z" fill="none" stroke="#d4d4d4" stroke-width="1.4"/></svg>
<svg style="left:1736px;top:306.6px" width="22" height="18" viewBox="0 0 23 19"><path d="M0.7 1.2H11.5L12.8 3.2H21.8V17.8H0.7Z" fill="#cfab66" stroke="#efd08e" stroke-width="1.2"/><path d="M1.5 3.4H12" stroke="#efd08e" stroke-width="1" fill="none"/></svg>
<span class="tt" id="T6" style="left:1766px;top:301px;letter-spacing:0.495px">AidOpeGroup</span>
<svg style="left:1702.6px;top:340.6px" width="10" height="10" viewBox="0 0 10 10"><path d="M10 0V10H0Z" fill="#c8c8c8"/></svg>
<svg style="left:1735px;top:336px" width="26" height="19" viewBox="0 0 26 19"><path d="M0.7 1.2H11.5L12.8 3.4H21.5V7H24.8L21.2 17.8H0.7Z" fill="#cfab66" stroke="#efd08e" stroke-width="1.2"/><path d="M2 3.2H11.5L13 5.2H20V7H5.5L2 9.5Z" fill="#5a4526"/></svg>
<span class="tt" id="T7" style="left:1766px;top:331px;letter-spacing:0.251px">AllFormsHere</span>
<svg style="left:1729px;top:367.6px" width="10" height="16" viewBox="0 0 10 16"><path d="M2 1.6L9 8L2 14.4Z" fill="none" stroke="#d4d4d4" stroke-width="1.4"/></svg>
<svg style="left:1763px;top:366.6px" width="22" height="18" viewBox="0 0 23 19"><path d="M0.7 1.2H11.5L12.8 3.2H21.8V17.8H0.7Z" fill="#cfab66" stroke="#efd08e" stroke-width="1.2"/><path d="M1.5 3.4H12" stroke="#efd08e" stroke-width="1" fill="none"/></svg>
<span class="tt" id="T8" style="left:1794px;top:361px;letter-spacing:0.531px">ColorOperationForm</span>
<svg style="left:1729px;top:397.6px" width="10" height="16" viewBox="0 0 10 16"><path d="M2 1.6L9 8L2 14.4Z" fill="none" stroke="#d4d4d4" stroke-width="1.4"/></svg>
<svg style="left:1763px;top:396.6px" width="22" height="18" viewBox="0 0 23 19"><path d="M0.7 1.2H11.5L12.8 3.2H21.8V17.8H0.7Z" fill="#cfab66" stroke="#efd08e" stroke-width="1.2"/><path d="M1.5 3.4H12" stroke="#efd08e" stroke-width="1" fill="none"/></svg>
<span class="tt" id="T9" style="left:1794px;top:391px;letter-spacing:0.468px">FolderOperationForm</span>
<svg style="left:1729px;top:427.6px" width="10" height="16" viewBox="0 0 10 16"><path d="M2 1.6L9 8L2 14.4Z" fill="none" stroke="#d4d4d4" stroke-width="1.4"/></svg>
<svg style="left:1763px;top:426.6px" width="22" height="18" viewBox="0 0 23 19"><path d="M0.7 1.2H11.5L12.8 3.2H21.8V17.8H0.7Z" fill="#cfab66" stroke="#efd08e" stroke-width="1.2"/><path d="M1.5 3.4H12" stroke="#efd08e" stroke-width="1" fill="none"/></svg>
<span class="tt" id="T10" style="left:1794px;top:421px;letter-spacing:0.476px">InsertCropDeleteTextForm</span>
<svg style="left:1729.6px;top:460.6px" width="10" height="10" viewBox="0 0 10 10"><path d="M10 0V10H0Z" fill="#c8c8c8"/></svg>
<svg style="left:1762px;top:456px" width="26" height="19" viewBox="0 0 26 19"><path d="M0.7 1.2H11.5L12.8 3.4H21.5V7H24.8L21.2 17.8H0.7Z" fill="#cfab66" stroke="#efd08e" stroke-width="1.2"/><path d="M2 3.2H11.5L13 5.2H20V7H5.5L2 9.5Z" fill="#5a4526"/></svg>
<span class="tt" id="T11" style="left:1794px;top:451px;letter-spacing:0.488px">LineOperationForm</span>
<svg style="left:1756px;top:487.6px" width="10" height="16" viewBox="0 0 10 16"><path d="M2 1.6L9 8L2 14.4Z" fill="none" stroke="#d4d4d4" stroke-width="1.4"/></svg>
<svg style="left:1790px;top:485.6px" width="22" height="20" viewBox="0 0 22 20"><rect x="1" y="1" width="20" height="17.6" fill="#2d2d2d" stroke="#bdbdbd" stroke-width="1.6"/><path d="M1 5.4H21" stroke="#bdbdbd" stroke-width="1.6"/><rect x="4" y="10.9" width="6.4" height="4.8" fill="none" stroke="#9a6dd0" stroke-width="1.5"/><rect x="13" y="8" width="4.8" height="4.8" fill="none" stroke="#9a6dd0" stroke-width="1.5"/></svg>
<span class="tt" id="T12" style="left:1820px;top:481px;letter-spacing:0.367px">InsertLineForm.vb</span>
<svg style="left:1756px;top:517.6px" width="10" height="16" viewBox="0 0 10 16"><path d="M2 1.6L9 8L2 14.4Z" fill="none" stroke="#d4d4d4" stroke-width="1.4"/></svg>
<svg style="left:1790px;top:515.6px" width="22" height="20" viewBox="0 0 22 20"><rect x="1" y="1" width="20" height="17.6" fill="#2d2d2d" stroke="#bdbdbd" stroke-width="1.6"/><path d="M1 5.4H21" stroke="#bdbdbd" stroke-width="1.6"/><rect x="4" y="10.9" width="6.4" height="4.8" fill="none" stroke="#9a6dd0" stroke-width="1.5"/><rect x="13" y="8" width="4.8" height="4.8" fill="none" stroke="#9a6dd0" stroke-width="1.5"/></svg>
<span class="tt" id="T13" style="left:1820px;top:511px;letter-spacing:0.215px">LineStackForm.vb</span>
<svg style="left:1756px;top:547.6px" width="10" height="16" viewBox="0 0 10 16"><path d="M2 1.6L9 8L2 14.4Z" fill="none" stroke="#d4d4d4" stroke-width="1.4"/></svg>
<svg style="left:1790px;top:545.6px" width="22" height="20" viewBox="0 0 22 20"><rect x="1" y="1" width="20" height="17.6" fill="#2d2d2d" stroke="#bdbdbd" stroke-width="1.6"/><path d="M1 5.4H21" stroke="#bdbdbd" stroke-width="1.6"/><rect x="4" y="10.9" width="6.4" height="4.8" fill="none" stroke="#9a6dd0" stroke-width="1.5"/><rect x="13" y="8" width="4.8" height="4.8" fill="none" stroke="#9a6dd0" stroke-width="1.5"/></svg>
<span class="tt" id="T14" style="left:1820px;top:541px;letter-spacing:0.500px">One2TwoDimensionForm.vb</span>
<svg style="left:1756px;top:577.6px" width="10" height="16" viewBox="0 0 10 16"><path d="M2 1.6L9 8L2 14.4Z" fill="none" stroke="#d4d4d4" stroke-width="1.4"/></svg>
<svg style="left:1790px;top:575.6px" width="22" height="20" viewBox="0 0 22 20"><rect x="1" y="1" width="20" height="17.6" fill="#2d2d2d" stroke="#bdbdbd" stroke-width="1.6"/><path d="M1 5.4H21" stroke="#bdbdbd" stroke-width="1.6"/><rect x="4" y="10.9" width="6.4" height="4.8" fill="none" stroke="#9a6dd0" stroke-width="1.5"/><rect x="13" y="8" width="4.8" height="4.8" fill="none" stroke="#9a6dd0" stroke-width="1.5"/></svg>
<span class="tt" id="T15" style="left:1820px;top:571px;letter-spacing:0.128px">SalarySliceOpeForm.vb</span>
<svg style="left:1756px;top:607.6px" width="10" height="16" viewBox="0 0 10 16"><path d="M2 1.6L9 8L2 14.4Z" fill="none" stroke="#d4d4d4" stroke-width="1.4"/></svg>
<svg style="left:1790px;top:605.6px" width="22" height="20" viewBox="0 0 22 20"><rect x="1" y="1" width="20" height="17.6" fill="#2d2d2d" stroke="#bdbdbd" stroke-width="1.6"/><path d="M1 5.4H21" stroke="#bdbdbd" stroke-width="1.6"/><rect x="4" y="10.9" width="6.4" height="4.8" fill="none" stroke="#9a6dd0" stroke-width="1.5"/><rect x="13" y="8" width="4.8" height="4.8" fill="none" stroke="#9a6dd0" stroke-width="1.5"/></svg>
<span class="tt" id="T16" style="left:1820px;top:601px;letter-spacing:0.500px">Two2OneDimensionForm.vb</span>
<svg style="left:1756px;top:637.6px" width="10" height="16" viewBox="0 0 10 16"><path d="M2 1.6L9 8L2 14.4Z" fill="none" stroke="#d4d4d4" stroke-width="1.4"/></svg>
<svg style="left:1790px;top:635.6px" width="22" height="20" viewBox="0 0 22 20"><rect x="1" y="1" width="20" height="17.6" fill="#2d2d2d" stroke="#bdbdbd" stroke-width="1.6"/><path d="M1 5.4H21" stroke="#bdbdbd" stroke-width="1.6"/><rect x="4" y="10.9" width="6.4" height="4.8" fill="none" stroke="#9a6dd0" stroke-width="1.5"/><rect x="13" y="8" width="4.8" height="4.8" fill="none" stroke="#9a6dd0" stroke-width="1.5"/></svg>
<span class="tt" id="T17" style="left:1820px;top:631px;letter-spacing:0.534px">UnpivotForm.vb</span>
<svg style="left:1756px;top:667.6px" width="10" height="16" viewBox="0 0 10 16"><path d="M2 1.6L9 8L2 14.4Z" fill="none" stroke="#d4d4d4" stroke-width="1.4"/></svg>
<svg style="left:1790px;top:665.6px" width="22" height="20" viewBox="0 0 22 20"><rect x="1" y="1" width="20" height="17.6" fill="#2d2d2d" stroke="#bdbdbd" stroke-width="1.6"/><path d="M1 5.4H21" stroke="#bdbdbd" stroke-width="1.6"/><rect x="4" y="10.9" width="6.4" height="4.8" fill="none" stroke="#9a6dd0" stroke-width="1.5"/><rect x="13" y="8" width="4.8" height="4.8" fill="none" stroke="#9a6dd0" stroke-width="1.5"/></svg>
<span class="tt" id="T18" style="left:1820px;top:661px;letter-spacing:0.443px">VagueLinkForm.vb</span>
<svg style="left:1729px;top:697.6px" width="10" height="16" viewBox="0 0 10 16"><path d="M2 1.6L9 8L2 14.4Z" fill="none" stroke="#d4d4d4" stroke-width="1.4"/></svg>
<svg style="left:1763px;top:696.6px" width="22" height="18" viewBox="0 0 23 19"><path d="M0.7 1.2H11.5L12.8 3.2H21.8V17.8H0.7Z" fill="#cfab66" stroke="#efd08e" stroke-width="1.2"/><path d="M1.5 3.4H12" stroke="#efd08e" stroke-width="1" fill="none"/></svg>
<span class="tt" id="T19" style="left:1794px;top:691px;letter-spacing:0.730px">NumOperationForm</span>
<svg style="left:1729px;top:727.6px" width="10" height="16" viewBox="0 0 10 16"><path d="M2 1.6L9 8L2 14.4Z" fill="none" stroke="#d4d4d4" stroke-width="1.4"/></svg>
<svg style="left:1763px;top:726.6px" width="22" height="18" viewBox="0 0 23 19"><path d="M0.7 1.2H11.5L12.8 3.2H21.8V17.8H0.7Z" fill="#cfab66" stroke="#efd08e" stroke-width="1.2"/><path d="M1.5 3.4H12" stroke="#efd08e" stroke-width="1" fill="none"/></svg>
<span class="tt" id="T20" style="left:1794px;top:721px;letter-spacing:0.539px">PictureOperationForm</span>
<svg style="left:1729px;top:757.6px" width="10" height="16" viewBox="0 0 10 16"><path d="M2 1.6L9 8L2 14.4Z" fill="none" stroke="#d4d4d4" stroke-width="1.4"/></svg>
<svg style="left:1763px;top:756.6px" width="22" height="18" viewBox="0 0 23 19"><path d="M0.7 1.2H11.5L12.8 3.2H21.8V17.8H0.7Z" fill="#cfab66" stroke="#efd08e" stroke-width="1.2"/><path d="M1.5 3.4H12" stroke="#efd08e" stroke-width="1" fill="none"/></svg>
<span class="tt" id="T21" style="left:1794px;top:751px;letter-spacing:0.328px">WorkBookSheetsForm</span>
<svg style="left:1729px;top:787.6px" width="10" height="16" viewBox="0 0 10 16"><path d="M2 1.6L9 8L2 14.4Z" fill="none" stroke="#d4d4d4" stroke-width="1.4"/></svg>
<svg style="left:1763px;top:785.6px" width="22" height="20" viewBox="0 0 22 20"><rect x="1" y="1" width="20" height="17.6" fill="#2d2d2d" stroke="#bdbdbd" stroke-width="1.6"/><path d="M1 5.4H21" stroke="#bdbdbd" stroke-width="1.6"/><rect x="4" y="10.9" width="6.4" height="4.8" fill="none" stroke="#9a6dd0" stroke-width="1.5"/><rect x="13" y="8" width="4.8" height="4.8" fill="none" stroke="#9a6dd0" stroke-width="1.5"/></svg>
<span class="tt" id="T22" style="left:1794px;top:781px;letter-spacing:0.476px">AuthorizeForm.vb</span>
<svg style="left:1729px;top:817.6px" width="10" height="16" viewBox="0 0 10 16"><path d="M2 1.6L9 8L2 14.4Z" fill="none" stroke="#d4d4d4" stroke-width="1.4"/></svg>
<svg style="left:1763px;top:815.6px" width="22" height="20" viewBox="0 0 22 20"><rect x="1" y="1" width="20" height="17.6" fill="#2d2d2d" stroke="#bdbdbd" stroke-width="1.6"/><path d="M1 5.4H21" stroke="#bdbdbd" stroke-width="1.6"/><rect x="4" y="10.9" width="6.4" height="4.8" fill="none" stroke="#9a6dd0" stroke-width="1.5"/><rect x="13" y="8" width="4.8" height="4.8" fill="none" stroke="#9a6dd0" stroke-width="1.5"/></svg>
<span class="tt" id="T23" style="left:1794px;top:811px;letter-spacing:0.235px">CircleForm.vb</span>
<svg style="left:1729px;top:847.6px" width="10" height="16" viewBox="0 0 10 16"><path d="M2 1.6L9 8L2 14.4Z" fill="none" stroke="#d4d4d4" stroke-width="1.4"/></svg>
<svg style="left:1763px;top:845.6px" width="22" height="20" viewBox="0 0 22 20"><rect x="1" y="1" width="20" height="17.6" fill="#2d2d2d" stroke="#bdbdbd" stroke-width="1.6"/><path d="M1 5.4H21" stroke="#bdbdbd" stroke-width="1.6"/><rect x="4" y="10.9" width="6.4" height="4.8" fill="none" stroke="#9a6dd0" stroke-width="1.5"/><rect x="13" y="8" width="4.8" height="4.8" fill="none" stroke="#9a6dd0" stroke-width="1.5"/></svg>
<span class="tt" id="T24" style="left:1794px;top:841px;letter-spacing:0.103px">ProcessForm.vb</span>
<svg style="left:1729px;top:877.6px" width="10" height="16" viewBox="0 0 10 16"><path d="M2 1.6L9 8L2 14.4Z" fill="none" stroke="#d4d4d4" stroke-width="1.4"/></svg>
<svg style="left:1763px;top:875.6px" width="22" height="20" viewBox="0 0 22 20"><rect x="1" y="1" width="20" height="17.6" fill="#2d2d2d" stroke="#bdbdbd" stroke-width="1.6"/><path d="M1 5.4H21" stroke="#bdbdbd" stroke-width="1.6"/><rect x="4" y="10.9" width="6.4" height="4.8" fill="none" stroke="#9a6dd0" stroke-width="1.5"/><rect x="13" y="8" width="4.8" height="4.8" fill="none" stroke="#9a6dd0" stroke-width="1.5"/></svg>
<span class="tt" id="T25" style="left:1794px;top:871px;letter-spacing:0.146px">RefSelectForm.vb</span>
<svg style="left:1729px;top:907.6px" width="10" height="16" viewBox="0 0 10 16"><path d="M2 1.6L9 8L2 14.4Z" fill="none" stroke="#d4d4d4" stroke-width="1.4"/></svg>
<svg style="left:1761px;top:904px" width="26" height="24" viewBox="0 0 26 24"><circle cx="17.6" cy="6.2" r="3.8" fill="none" stroke="#c4c4c4" stroke-width="1.6"/><path d="M11 17.5C11 12.8 14 11.2 17.6 11.2C21.2 11.2 24.2 12.8 24.6 17.5" fill="none" stroke="#c4c4c4" stroke-width="1.6"/><rect x="1" y="14.4" width="13" height="8.4" fill="#1f1f1f" stroke="#c4c4c4" stroke-width="1.6"/><path d="M1 17H14" stroke="#c4c4c4" stroke-width="1.4"/></svg>
<span class="tt" id="T26" style="left:1794px;top:901px;letter-spacing:0.679px">WorkbookNavigatorControl.vb</span>
<svg style="left:1702px;top:937.6px" width="10" height="16" viewBox="0 0 10 16"><path d="M2 1.6L9 8L2 14.4Z" fill="none" stroke="#d4d4d4" stroke-width="1.4"/></svg>
<svg style="left:1736px;top:936.6px" width="22" height="18" viewBox="0 0 23 19"><path d="M0.7 1.2H11.5L12.8 3.2H21.8V17.8H0.7Z" fill="#cfab66" stroke="#efd08e" stroke-width="1.2"/><path d="M1.5 3.4H12" stroke="#efd08e" stroke-width="1" fill="none"/></svg>
<span class="tt" id="T27" style="left:1766px;top:931px;letter-spacing:0.462px">CommonFuncs</span>
<svg style="left:1702px;top:967.6px" width="10" height="16" viewBox="0 0 10 16"><path d="M2 1.6L9 8L2 14.4Z" fill="none" stroke="#d4d4d4" stroke-width="1.4"/></svg>
<svg style="left:1736px;top:966.6px" width="22" height="18" viewBox="0 0 23 19"><path d="M0.7 1.2H11.5L12.8 3.2H21.8V17.8H0.7Z" fill="#cfab66" stroke="#efd08e" stroke-width="1.2"/><path d="M1.5 3.4H12" stroke="#efd08e" stroke-width="1" fill="none"/></svg>
<span class="tt" id="T28" style="left:1766px;top:961px;letter-spacing:0.080px">EncoderFuncs</span>
<svg style="left:1702px;top:997.6px" width="10" height="16" viewBox="0 0 10 16"><path d="M2 1.6L9 8L2 14.4Z" fill="none" stroke="#d4d4d4" stroke-width="1.4"/></svg>
<svg style="left:1736px;top:996.6px" width="22" height="18" viewBox="0 0 23 19"><path d="M0.7 1.2H11.5L12.8 3.2H21.8V17.8H0.7Z" fill="#cfab66" stroke="#efd08e" stroke-width="1.2"/><path d="M1.5 3.4H12" stroke="#efd08e" stroke-width="1" fill="none"/></svg>
<span class="tt" id="T29" style="left:1766px;top:991px;letter-spacing:0.288px">FilterExtractGroup</span>
<svg style="left:1702px;top:1027.6px" width="10" height="16" viewBox="0 0 10 16"><path d="M2 1.6L9 8L2 14.4Z" fill="none" stroke="#d4d4d4" stroke-width="1.4"/></svg>
<svg style="left:1736px;top:1026.6px" width="22" height="18" viewBox="0 0 23 19"><path d="M0.7 1.2H11.5L12.8 3.2H21.8V17.8H0.7Z" fill="#cfab66" stroke="#efd08e" stroke-width="1.2"/><path d="M1.5 3.4H12" stroke="#efd08e" stroke-width="1" fill="none"/></svg>
<span class="tt" id="T30" style="left:1766px;top:1021px;letter-spacing:0.515px">FolderOperationGroup</span>
<svg style="left:1702px;top:1057.6px" width="10" height="16" viewBox="0 0 10 16"><path d="M2 1.6L9 8L2 14.4Z" fill="none" stroke="#d4d4d4" stroke-width="1.4"/></svg>
<svg style="left:1736px;top:1056.6px" width="22" height="18" viewBox="0 0 23 19"><path d="M0.7 1.2H11.5L12.8 3.2H21.8V17.8H0.7Z" fill="#cfab66" stroke="#efd08e" stroke-width="1.2"/><path d="M1.5 3.4H12" stroke="#efd08e" stroke-width="1" fill="none"/></svg>
<span class="tt" id="T31" style="left:1766px;top:1051px;letter-spacing:0.656px">GetComInfo</span>
</div></div>
<!-- SE bottom tabs -->
<span id="bt1" style="left:1668px;top:1074.5px;font-size:19px;line-height:28px;color:#b4b4b4;white-space:pre;letter-spacing:0.943px">GitHub Copilot <i class="z" style="letter-spacing:0">聊天</i></span>
<div style="left:1858px;top:1071px;width:190px;height:33px;background:#1f1f1f;border:2px solid #3a3a3a;border-top:0"></div>
<span id="bt2" class="z" style="left:1867px;top:1075px;font-size:19px;line-height:28px;color:#fafafa;white-space:pre">解决方案资源管理器</span>
<!-- properties panel -->
<div style="left:1658px;top:1113px;width:536px;height:120px;background:#1f1f1f;border:2px solid #3a3a3a"></div>
<span class="z" style="left:1666px;top:1120px;font-size:19px;line-height:28px;color:#cccccc;white-space:pre">属性</span>
<svg style="left:2112px;top:1128px" width="14" height="8" viewBox="0 0 14 8"><path d="M0.5 0.5H13.5L7 7Z" fill="#d0d0d0"/></svg>
<svg style="left:2141px;top:1123px" width="13" height="18" viewBox="0 0 13 18"><path d="M3.2 1H9.6V9.2H3.2Z M1 9.6H12 M6.4 9.8V17" fill="none" stroke="#e0e0e0" stroke-width="1.6"/><path d="M8.4 1.5V9" stroke="#e0e0e0" stroke-width="2"/></svg>
<svg style="left:2165px;top:1124px" width="17" height="14" viewBox="0 0 17 14"><path d="M1.5 1L15.5 13M15.5 1L1.5 13" fill="none" stroke="#e6e6e6" stroke-width="1.9"/></svg>
<div style="left:1660px;top:1149px;width:532px;height:33px;background:#383838"></div>
<svg style="left:2173px;top:1162px" width="9" height="6" viewBox="0 0 9 6"><path d="M0.3 0.3H8.7L4.5 5.4Z" fill="#d0d0d0"/></svg>
<svg style="left:1668px;top:1189px" width="24" height="25" viewBox="0 0 24 25"><g fill="#d0d0d0"><rect x="0.6" y="1" width="8.6" height="8.6"/><rect x="0.6" y="14.6" width="8.6" height="8.6"/><rect x="11.6" y="1.2" width="8" height="1.8"/><rect x="11.6" y="4.6" width="11" height="1.8"/><rect x="11.6" y="8" width="11" height="1.8"/><rect x="11.6" y="11.4" width="11" height="1.8"/><rect x="11.6" y="14.8" width="8" height="1.8"/><rect x="11.6" y="18.2" width="11" height="1.8"/><rect x="11.6" y="21.6" width="7" height="1.8"/><rect x="20.4" y="21.6" width="2.2" height="1.8"/></g><path d="M2.4 5.3H7.4M4.9 2.8V7.8M2.4 18.9H7.4M4.9 16.4V21.4" stroke="#1f1f1f" stroke-width="1.6"/></svg>
<div style="left:1697px;top:1185px;width:34px;height:40px;background:#2b2b2b;border:1px solid #7a6af0"></div>
<svg style="left:1702px;top:1189px" width="26" height="27" viewBox="0 0 26 27"><rect x="1" y="2" width="11" height="9.4" fill="#c4c4c4"/><rect x="1" y="15" width="9.4" height="9.4" fill="#c4c4c4"/><text x="6.5" y="10.4" text-anchor="middle" font-family="Liberation Sans, sans-serif" font-weight="bold" font-size="9.5" fill="#2b2b2b">A</text><text x="5.7" y="23.4" text-anchor="middle" font-family="Liberation Sans, sans-serif" font-weight="bold" font-size="9.5" fill="#2b2b2b">Z</text><path d="M13.6 1V6H19.4V12" fill="none" stroke="#d6d6d6" stroke-width="1.4"/><path d="M16.6 6.6H19.8V15.4H22.8L18.2 21.8L13.6 15.4H16.6Z" fill="#3fb2f2" stroke="#d6ecf8" stroke-width="0.9"/></svg>
<div style="left:1734px;top:1186px;width:2px;height:32px;background:#333"></div>
<svg style="left:1741px;top:1187px" width="26" height="27" viewBox="0 0 26 27"><path d="M17.4 1.6A7 7 0 0 0 10.8 11L1.6 20.2A2.5 2.5 0 0 0 5.2 23.8L14.6 14.6A7 7 0 1 0 17.4 1.6Z" fill="#8a8a8a"/><path d="M15.4 6.6L18.6 4L21.6 6.4L18.4 9.2Z" fill="#5a5a5a"/></svg>

</body></html>
